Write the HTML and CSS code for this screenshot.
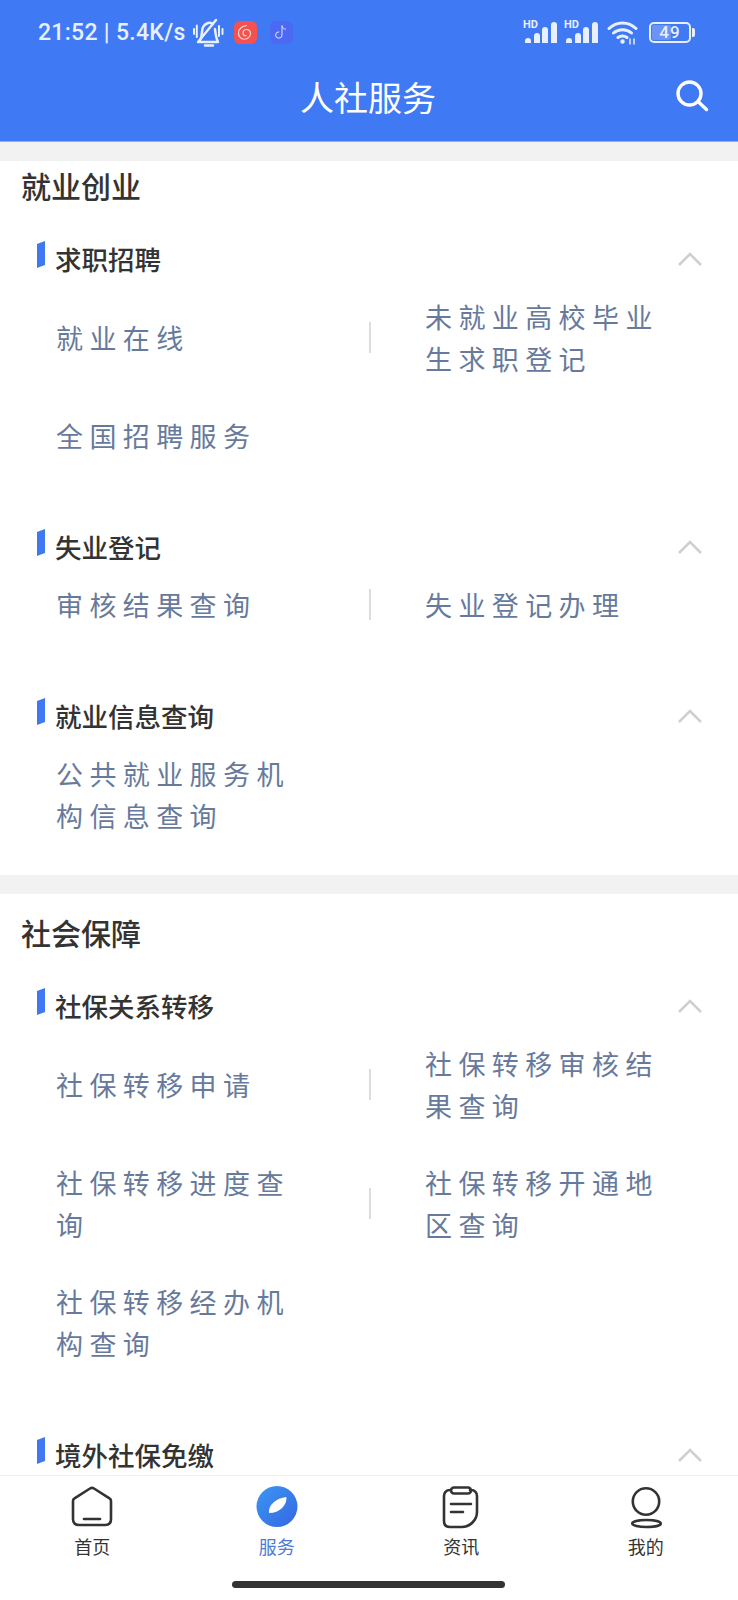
FILE: index.html
```html
<!DOCTYPE html>
<html lang="zh-CN">
<head>
    <meta charset="UTF-8">
    <meta name="viewport" content="width=device-width, initial-scale=1.0">
    <title>人社服务</title>
    <link rel="stylesheet" href="styles.css">
</head>
<body>
    <header class="topbar">
        <div class="statusbar">
            <div class="status-left">
                <span class="status-text">21:52 | 5.4K/s</span>
                <svg class="bell" width="34" height="30" viewBox="0 0 34 30" fill="none" stroke="#e8efff" stroke-width="2.500" stroke-linecap="round" stroke-linejoin="round">
                    <path d="M8 25c2-3 3-6 3-10 0-5 3-8 6-9 2-.5 4 0 5 1M24 12c.5 5 1 9 3 13H8"/>
                    <path d="M14 28.500h8M7 25 25 3"/>
                    <path d="M3 12v5M5.800 8.500v11.500M28 9v10M31.500 12v5" stroke-width="2"/>
                </svg>
                <span class="app-tile app-red">
                    <svg width="16" height="16" viewBox="0 0 16 16" fill="none" stroke="#ffd9d6" stroke-width="1.200" stroke-linecap="round">
                        <path d="M9.500 1.500C5 2 1.500 5 1.500 9a6 6 0 0 0 12 .5c0-2.500-2-4-4-4S6 7 6 9s1.500 3 3 2.500"/>
                    </svg>
                </span>
                <span class="app-tile app-violet">
                    <svg width="16" height="16" viewBox="0 0 16 16" fill="none" stroke="#dfe4ff" stroke-width="1" stroke-linecap="round">
                        <path d="M9 2v9a3.200 3.200 0 1 1-3.200-3.200M9 2c.4 2 1.600 3 3.500 3.200"/>
                    </svg>
                </span>
            </div>
            <div class="status-right">
                <span class="signal"><b class="hd">HD</b><i class="s1"></i><i class="s2"></i><i class="s3"></i><i class="s4"></i></span>
                <span class="signal"><b class="hd">HD</b><i class="s1"></i><i class="s2"></i><i class="s3"></i><i class="s4"></i></span>
                <svg class="wifi" width="31" height="25" viewBox="0 0 31 25" fill="none" stroke="#e8efff" stroke-width="3" stroke-linecap="round">
                    <path d="M2 8.500C9.500 1 21.500 1 29 8.500M6.500 13c5-4.500 13-4.500 18 0M11 17.500c2.500-2 6.500-2 9 0"/>
                    <circle cx="15.500" cy="21.500" r="2.200" fill="#e8efff" stroke="none"/>
                    <path d="M23 24v-5M27 24v-5" stroke-width="1.500"/>
                </svg>
                <span class="battery"><span class="battery-fill"></span><span class="battery-num">49</span></span>
                <span class="battery-tip"></span>
            </div>
        </div>
        <div class="navbar">
            <h1 class="page-title">人社服务</h1>
            <svg class="search" width="36" height="36" viewBox="0 0 36 36" fill="none" stroke="#fff" stroke-width="3.400" stroke-linecap="round">
                <circle cx="16.500" cy="15.500" r="11.500"/>
                <path d="M25 23.500l8.500 8"/>
            </svg>
        </div>
    </header>

    <main class="content">
        <section class="section section-first">
            <h2 class="section-title">就业创业</h2>

            <div class="group">
                <div class="group-head">
                    <span class="mark"></span><h3>求职招聘</h3>
                    <svg class="chevron" width="26" height="14" viewBox="0 0 26 14"><path d="M2 13 13 2l11 11"/></svg>
                </div>
                <div class="row row-tall">
                    <a class="cell">就业在线</a><span class="sep"></span><a class="cell cell-right">未就业高校毕业生求职登记</a>
                </div>
                <div class="row">
                    <a class="cell">全国招聘服务</a>
                </div>
            </div>

            <div class="group">
                <div class="group-head">
                    <span class="mark"></span><h3>失业登记</h3>
                    <svg class="chevron" width="26" height="14" viewBox="0 0 26 14"><path d="M2 13 13 2l11 11"/></svg>
                </div>
                <div class="row">
                    <a class="cell">审核结果查询</a><span class="sep"></span><a class="cell cell-right">失业登记办理</a>
                </div>
            </div>

            <div class="group">
                <div class="group-head">
                    <span class="mark"></span><h3>就业信息查询</h3>
                    <svg class="chevron" width="26" height="14" viewBox="0 0 26 14"><path d="M2 13 13 2l11 11"/></svg>
                </div>
                <div class="row row-tall">
                    <a class="cell">公共就业服务机构信息查询</a>
                </div>
            </div>
        </section>

        <section class="section">
            <h2 class="section-title">社会保障</h2>

            <div class="group">
                <div class="group-head">
                    <span class="mark"></span><h3>社保关系转移</h3>
                    <svg class="chevron" width="26" height="14" viewBox="0 0 26 14"><path d="M2 13 13 2l11 11"/></svg>
                </div>
                <div class="row row-tall">
                    <a class="cell">社保转移申请</a><span class="sep"></span><a class="cell cell-right">社保转移审核结果查询</a>
                </div>
                <div class="row row-tall">
                    <a class="cell">社保转移进度查询</a><span class="sep"></span><a class="cell cell-right">社保转移开通地区查询</a>
                </div>
                <div class="row row-tall">
                    <a class="cell">社保转移经办机构查询</a>
                </div>
            </div>

            <div class="group">
                <div class="group-head">
                    <span class="mark"></span><h3>境外社保免缴</h3>
                    <svg class="chevron" width="26" height="14" viewBox="0 0 26 14"><path d="M2 13 13 2l11 11"/></svg>
                </div>
            </div>
        </section>
    </main>

    <nav class="tabbar">
        <div class="tab">
            <svg width="44" height="44" viewBox="0 0 44 44" fill="none" stroke="#333" stroke-width="2.600" stroke-linecap="round" stroke-linejoin="round">
                <path d="M3 15c0-1 .5-2 1.500-2.600L20 2.500c1.300-.8 2.700-.8 4 0l15.500 9.900c1 .6 1.500 1.600 1.500 2.600v18c0 4-2 6-6 6H9c-4 0-6-2-6-6z"/>
                <path d="M14 33h16"/>
            </svg>
            <span class="tab-label">首页</span>
        </div>
        <div class="tab tab-active">
            <svg width="44" height="44" viewBox="0 0 44 44">
                <defs>
                    <linearGradient id="serviceFill" x1="0" y1="0" x2="1" y2="1">
                        <stop offset="0" stop-color="#3d96f2"/>
                        <stop offset="1" stop-color="#3367e2"/>
                    </linearGradient>
                </defs>
                <circle cx="22" cy="20.500" r="20.500" fill="url(#serviceFill)"/>
                <path d="M14 27C13 19 21 12 31.500 11 32 19 25 27 14 27z" fill="#fff"/>
            </svg>
            <span class="tab-label">服务</span>
        </div>
        <div class="tab">
            <svg width="44" height="44" viewBox="0 0 44 44" fill="none" stroke="#333" stroke-width="2.600" stroke-linecap="round" stroke-linejoin="round">
                <path d="M12 4h-1C7 4 5 7 5 10v25c0 4 2 6 6 6h12c8 0 15-7 15-15V10c0-3-2-6-6-6h-1"/>
                <rect x="12" y="1.500" width="20" height="6" rx="3"/>
                <path d="M12 18h20M12 26h12"/>
            </svg>
            <span class="tab-label">资讯</span>
        </div>
        <div class="tab">
            <svg width="44" height="44" viewBox="0 0 44 44" fill="none" stroke="#333" stroke-width="2.600">
                <circle cx="22" cy="15.500" r="13.200"/>
                <ellipse cx="22.500" cy="37.500" rx="14.300" ry="3.500"/>
            </svg>
            <span class="tab-label">我的</span>
        </div>
        <div class="home-bar"></div>
    </nav>
</body>
</html>
```

FILE: styles.css
```css
* {
    box-sizing: border-box;
}
html, body {
    height: 100%;
}
body {
    margin: 0;
    display: flex;
    flex-direction: column;
    height: 1600px;
    overflow: hidden;
    background-color: #f2f2f2;
    color: #333;
    font-family: "Noto Sans CJK SC", "Noto Sans", sans-serif;
}

/* top */
.topbar {
    flex: none;
    height: 142px;
    background-color: #4079f4;
    border-bottom: 1px solid #8eb0f5;
}
.statusbar {
    height: 64px;
    display: flex;
    justify-content: space-between;
    align-items: center;
    padding: 0 43px 0 38px;
    color: #e8efff;
}
.status-left, .status-right {
    display: flex;
    align-items: center;
}
.status-text {
    font-family: Roboto, sans-serif;
    font-size: 23px;
    font-weight: 500;
    letter-spacing: 0.3px;
}
.bell {
    margin-left: 5px;
}
.app-tile {
    width: 23px;
    height: 23px;
    border-radius: 6px;
    display: flex;
    align-items: center;
    justify-content: center;
}
.app-red {
    margin-left: 9px;
    background-color: #f5524f;
}
.app-violet {
    margin-left: 13px;
    background-color: #4b69f3;
}
.signal {
    position: relative;
    width: 32px;
    height: 22px;
    margin-right: 9px;
    display: flex;
    align-items: flex-end;
    justify-content: space-between;
}
.signal i {
    width: 6px;
    background-color: #e8efff;
    border-radius: 3px 3px 0 0;
}
.signal .s1 { height: 5px; }
.signal .s2 { height: 10px; }
.signal .s3 { height: 16px; }
.signal .s4 { height: 21px; }
.hd {
    position: absolute;
    left: -2px;
    top: -1px;
    font-family: Roboto, sans-serif;
    font-size: 11px;
    line-height: 10px;
}
.battery {
    position: relative;
    margin-left: 11px;
    width: 42px;
    height: 21px;
    border: 2px solid #e8efff;
    border-radius: 5px;
    display: flex;
    align-items: center;
    justify-content: center;
}
.battery-fill {
    position: absolute;
    left: 1px;
    top: 1px;
    bottom: 1px;
    width: 49%;
    border-radius: 2px;
    background-color: #6b94f6;
}
.battery-num {
    position: relative;
    font-family: Roboto, sans-serif;
    font-size: 17px;
    font-weight: 500;
    letter-spacing: 1px;
}
.battery-tip {
    width: 3px;
    height: 9px;
    margin-left: 1px;
    border-radius: 0 2px 2px 0;
    background-color: #e8efff;
}
.navbar {
    position: relative;
    height: 64px;
    padding-right: 2px;
    display: flex;
    align-items: center;
    justify-content: center;
}
.page-title {
    margin: 0;
    font-size: 34px;
    font-weight: 400;
    color: #fff;
}
.search {
    position: absolute;
    right: 29px;
    top: 14px;
}

/* list */
.content {
    flex: 1;
    min-height: 0;
    overflow: hidden;
    padding-top: 19px;
}
.section {
    background-color: #fff;
    padding: 18px 0 21px 0;
    margin-bottom: 19px;
}
.section-first {
    padding-top: 4px;
}
.section-title {
    margin: 0 0 34px 0;
    padding-left: 21px;
    font-size: 30px;
    line-height: 40px;
    font-weight: 500;
    color: #333;
}
.group {
    margin-top: 53px;
}
.section-title + .group {
    margin-top: 0;
}
.group-head {
    position: relative;
    height: 39px;
    display: flex;
    align-items: center;
    padding-left: 55px;
}
.group-head h3 {
    margin: 0;
    font-size: 26.500px;
    line-height: 34px;
    font-weight: 500;
    color: #333;
}
.mark {
    position: absolute;
    left: 37px;
    top: 2px;
    width: 8px;
    height: 27px;
    background-color: #3f78f0;
    clip-path: polygon(0 11%, 100% 0, 100% 89%, 0 100%);
}
.chevron {
    position: absolute;
    right: 35px;
    top: 13px;
    fill: none;
    stroke: #cfcfcf;
    stroke-width: 2.500;
}
.row {
    height: 77px;
    display: flex;
    align-items: center;
    padding-left: 56px;
}
.row-tall {
    height: 119px;
}
.cell {
    width: 313px;
    padding-right: 70px;
    font-size: 27px;
    line-height: 42px;
    letter-spacing: 6.4px;
    color: #677a9c;
}
.cell-right {
    width: 310px;
    padding: 0 0 0 54px;
}
.sep {
    width: 2px;
    height: 31px;
    background-color: #dcdcdc;
}

/* bottom */
.tabbar {
    position: relative;
    flex: none;
    height: 125px;
    display: grid;
    grid-template-columns: repeat(4, 1fr);
    align-items: start;
    padding-top: 10px;
    background-color: #fff;
    border-top: 1px solid #f0f0f0;
}
.tab {
    display: flex;
    flex-direction: column;
    align-items: center;
    color: #333;
}
.tab-active {
    color: #4a7bd8;
}
.tab-label {
    margin-top: 4px;
    font-size: 18px;
    line-height: 24px;
}
.home-bar {
    position: absolute;
    left: 232px;
    bottom: 12px;
    width: 273px;
    height: 7px;
    border-radius: 4px;
    background-color: #333;
}
```
